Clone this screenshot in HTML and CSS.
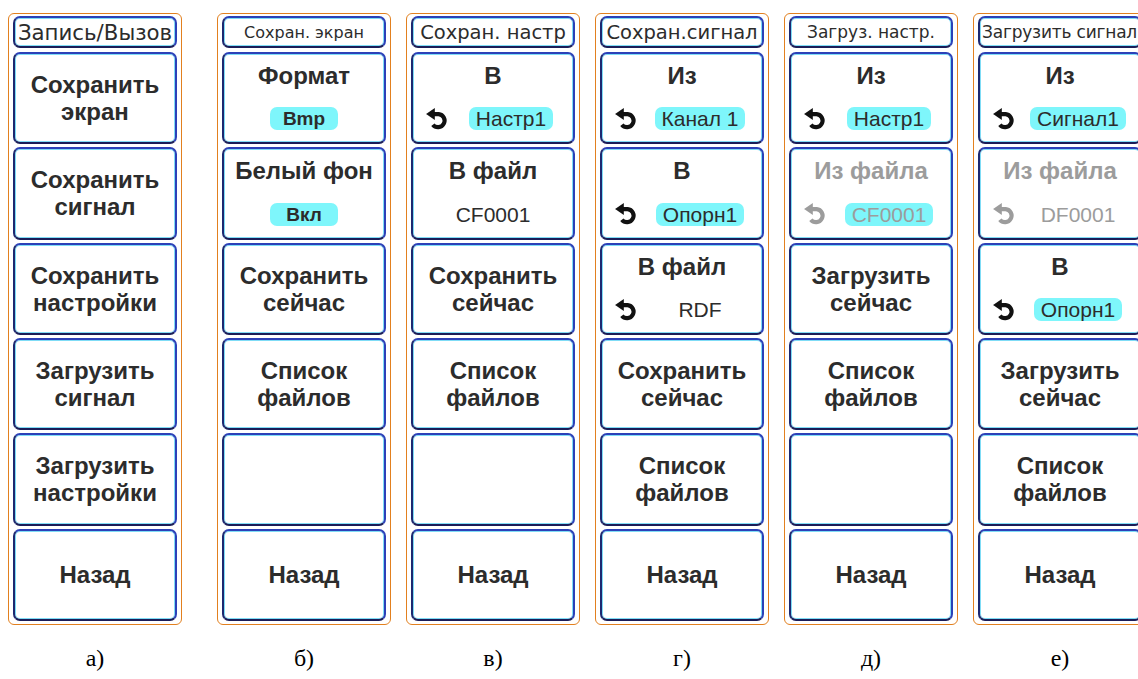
FILE: index.html
```html
<!DOCTYPE html>
<html lang="ru">
<head>
  <meta charset="UTF-8">
  <title>Меню Запись/Вызов</title>
  <link rel="stylesheet" href="styles.css">
</head>
<body>
  <svg width="0" height="0" class="defs">
    <symbol id="back" viewBox="0 0 22 20">
      <path d="M8 5.5 H12.5 A6 6 0 1 1 7.2 15.2" fill="none" stroke="currentColor" stroke-width="3.8"/>
      <polygon points="1,5.5 9,0 9,11" fill="currentColor"/>
    </symbol>
  </svg>

  <div class="menus">
    <!-- а) главное меню -->
    <div class="col first">
      <div class="panel">
        <div class="hdr s21">Запись/Вызов</div>
        <div class="btn"><span class="lbl">Сохранить<br>экран</span></div>
        <div class="btn"><span class="lbl">Сохранить<br>сигнал</span></div>
        <div class="btn"><span class="lbl">Сохранить<br>настройки</span></div>
        <div class="btn"><span class="lbl">Загрузить<br>сигнал</span></div>
        <div class="btn"><span class="lbl">Загрузить<br>настройки</span></div>
        <div class="btn"><span class="lbl">Назад</span></div>
      </div>
      <div class="cap">а)</div>
    </div>

    <!-- б) сохранение экрана -->
    <div class="col">
      <div class="panel">
        <div class="hdr s16">Сохран. экран</div>
        <div class="btn split">
          <div class="ttl">Формат</div>
          <div class="row mid"><span class="pill bold">Bmp</span></div>
        </div>
        <div class="btn split">
          <div class="ttl">Белый фон</div>
          <div class="row mid"><span class="pill bold">Вкл</span></div>
        </div>
        <div class="btn"><span class="lbl">Сохранить<br>сейчас</span></div>
        <div class="btn"><span class="lbl">Список<br>файлов</span></div>
        <div class="btn"></div>
        <div class="btn"><span class="lbl">Назад</span></div>
      </div>
      <div class="cap">б)</div>
    </div>

    <!-- в) сохранение настроек -->
    <div class="col">
      <div class="panel">
        <div class="hdr s20">Сохран. настр</div>
        <div class="btn split">
          <div class="ttl">В</div>
          <div class="row"><svg class="ico"><use href="#back"/></svg><span class="slot"><span class="pill">Настр1</span></span></div>
        </div>
        <div class="btn split">
          <div class="ttl">В файл</div>
          <div class="row mid"><span class="pill plain">CF0001</span></div>
        </div>
        <div class="btn"><span class="lbl">Сохранить<br>сейчас</span></div>
        <div class="btn"><span class="lbl">Список<br>файлов</span></div>
        <div class="btn"></div>
        <div class="btn"><span class="lbl">Назад</span></div>
      </div>
      <div class="cap">в)</div>
    </div>

    <!-- г) сохранение сигнала -->
    <div class="col">
      <div class="panel">
        <div class="hdr s20">Сохран.сигнал</div>
        <div class="btn split">
          <div class="ttl">Из</div>
          <div class="row"><svg class="ico"><use href="#back"/></svg><span class="slot"><span class="pill">Канал 1</span></span></div>
        </div>
        <div class="btn split">
          <div class="ttl">В</div>
          <div class="row"><svg class="ico"><use href="#back"/></svg><span class="slot"><span class="pill">Опорн1</span></span></div>
        </div>
        <div class="btn split">
          <div class="ttl">В файл</div>
          <div class="row"><svg class="ico"><use href="#back"/></svg><span class="slot"><span class="pill plain">RDF</span></span></div>
        </div>
        <div class="btn"><span class="lbl">Сохранить<br>сейчас</span></div>
        <div class="btn"><span class="lbl">Список<br>файлов</span></div>
        <div class="btn"><span class="lbl">Назад</span></div>
      </div>
      <div class="cap">г)</div>
    </div>

    <!-- д) загрузка настроек -->
    <div class="col">
      <div class="panel">
        <div class="hdr s17">Загруз. настр.</div>
        <div class="btn split">
          <div class="ttl">Из</div>
          <div class="row"><svg class="ico"><use href="#back"/></svg><span class="slot"><span class="pill">Настр1</span></span></div>
        </div>
        <div class="btn split dim">
          <div class="ttl">Из файла</div>
          <div class="row"><svg class="ico"><use href="#back"/></svg><span class="slot"><span class="pill">CF0001</span></span></div>
        </div>
        <div class="btn"><span class="lbl">Загрузить<br>сейчас</span></div>
        <div class="btn"><span class="lbl">Список<br>файлов</span></div>
        <div class="btn"></div>
        <div class="btn"><span class="lbl">Назад</span></div>
      </div>
      <div class="cap">д)</div>
    </div>

    <!-- е) загрузка сигнала -->
    <div class="col">
      <div class="panel">
        <div class="hdr s17 tight">Загрузить сигнал</div>
        <div class="btn split">
          <div class="ttl">Из</div>
          <div class="row"><svg class="ico"><use href="#back"/></svg><span class="slot"><span class="pill">Сигнал1</span></span></div>
        </div>
        <div class="btn split dim">
          <div class="ttl">Из файла</div>
          <div class="row"><svg class="ico"><use href="#back"/></svg><span class="slot"><span class="pill plain">DF0001</span></span></div>
        </div>
        <div class="btn split">
          <div class="ttl">В</div>
          <div class="row"><svg class="ico"><use href="#back"/></svg><span class="slot"><span class="pill">Опорн1</span></span></div>
        </div>
        <div class="btn"><span class="lbl">Загрузить<br>сейчас</span></div>
        <div class="btn"><span class="lbl">Список<br>файлов</span></div>
        <div class="btn"><span class="lbl">Назад</span></div>
      </div>
      <div class="cap">е)</div>
    </div>
  </div>
</body>
</html>
```

FILE: styles.css
```css
html, body {
  overflow: hidden;
}
body {
  margin: 0;
  padding: 13px 0 0 8px;
  background: #fff;
  font-family: "Liberation Sans", Arial, sans-serif;
  color: #2c2c2c;
}
.defs {
  position: absolute;
}
.menus {
  display: flex;
  gap: 15px;
}
.col {
  flex: none;
  width: 174px;
  display: flex;
  flex-direction: column;
}
.col.first {
  margin-right: 20px;
}
.panel {
  height: 612px;
  box-sizing: border-box;
  border: 1px solid #e2801f;
  border-radius: 6px;
  padding: 2px 4px 3px;
  display: grid;
  grid-template-rows: 33px repeat(6, 1fr);
  row-gap: 3px;
}
.hdr, .btn {
  box-sizing: border-box;
  border: 2px solid;
  border-color: #2b41b8 #2b41b8 #1a1d58 #1d2870;
  border-radius: 7px;
  box-shadow: inset 0 0 0 1px #7fdcf6;
  background: #fff;
  min-height: 0;
}
.hdr {
  margin-bottom: 1px;
  display: flex;
  align-items: center;
  justify-content: center;
  font-family: "DejaVu Sans", Verdana, sans-serif;
  white-space: nowrap;
  overflow: hidden;
}
.s16 { font-size: 16px; }
.s17 { font-size: 17px; }
.s20 { font-size: 19.5px; }
.s21 { font-size: 21.3px; }
.hdr.tight {
  justify-content: flex-start;
  padding-left: 2px;
  letter-spacing: -0.2px;
}
.btn {
  display: flex;
  flex-direction: column;
  align-items: center;
  justify-content: center;
  font-weight: bold;
  font-size: 24px;
  line-height: 27px;
  text-align: center;
}
.btn.split {
  justify-content: space-between;
  align-items: stretch;
  padding: 8px 0 12px;
}
.ttl {
  text-align: center;
}
.row {
  display: flex;
  align-items: center;
  padding-left: 12px;
  font-weight: normal;
  font-size: 21px;
  line-height: 23px;
}
.row.mid {
  justify-content: center;
  padding-left: 0;
}
.ico {
  width: 24px;
  height: 22px;
  flex: none;
  color: #111;
}
.slot {
  flex: 1;
  display: flex;
  justify-content: center;
}
.pill {
  background: #7ef6fb;
  border-radius: 7px;
  padding: 0 7px;
  height: 23px;
}
.pill.bold {
  font-weight: bold;
  font-size: 19px;
  min-width: 54px;
  text-align: center;
}
.pill.plain {
  background: none;
}
.dim .ttl,
.dim .pill {
  color: #9c9c9c;
}
.dim .ico {
  color: #9c9c9c;
}
.cap {
  margin-top: 20px;
  text-align: center;
  font-family: "Liberation Serif", "Times New Roman", serif;
  font-size: 24px;
  color: #000;
}
```
